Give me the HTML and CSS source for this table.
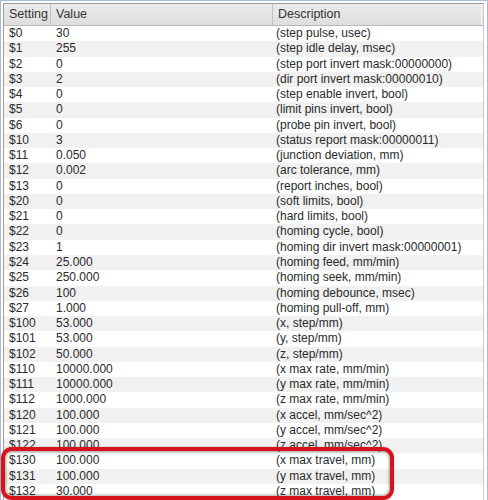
FILE: index.html
```html
<!DOCTYPE html>
<html>
<head>
<meta charset="utf-8">
<link rel="stylesheet" href="styles.css">
</head>
<body>
<div class="frame">
  <div class="grid">
    <div class="row head"><div class="c c1">Setting</div><div class="c c2">Value</div><div class="c c3">Description</div></div>
    <div class="row"><div class="c c1">$0</div><div class="c c2">30</div><div class="c c3">(step pulse, usec)</div></div>
    <div class="row"><div class="c c1">$1</div><div class="c c2">255</div><div class="c c3">(step idle delay, msec)</div></div>
    <div class="row"><div class="c c1">$2</div><div class="c c2">0</div><div class="c c3">(step port invert mask:00000000)</div></div>
    <div class="row"><div class="c c1">$3</div><div class="c c2">2</div><div class="c c3">(dir port invert mask:00000010)</div></div>
    <div class="row"><div class="c c1">$4</div><div class="c c2">0</div><div class="c c3">(step enable invert, bool)</div></div>
    <div class="row"><div class="c c1">$5</div><div class="c c2">0</div><div class="c c3">(limit pins invert, bool)</div></div>
    <div class="row"><div class="c c1">$6</div><div class="c c2">0</div><div class="c c3">(probe pin invert, bool)</div></div>
    <div class="row"><div class="c c1">$10</div><div class="c c2">3</div><div class="c c3">(status report mask:00000011)</div></div>
    <div class="row"><div class="c c1">$11</div><div class="c c2">0.050</div><div class="c c3">(junction deviation, mm)</div></div>
    <div class="row"><div class="c c1">$12</div><div class="c c2">0.002</div><div class="c c3">(arc tolerance, mm)</div></div>
    <div class="row"><div class="c c1">$13</div><div class="c c2">0</div><div class="c c3">(report inches, bool)</div></div>
    <div class="row"><div class="c c1">$20</div><div class="c c2">0</div><div class="c c3">(soft limits, bool)</div></div>
    <div class="row"><div class="c c1">$21</div><div class="c c2">0</div><div class="c c3">(hard limits, bool)</div></div>
    <div class="row"><div class="c c1">$22</div><div class="c c2">0</div><div class="c c3">(homing cycle, bool)</div></div>
    <div class="row"><div class="c c1">$23</div><div class="c c2">1</div><div class="c c3">(homing dir invert mask:00000001)</div></div>
    <div class="row"><div class="c c1">$24</div><div class="c c2">25.000</div><div class="c c3">(homing feed, mm/min)</div></div>
    <div class="row"><div class="c c1">$25</div><div class="c c2">250.000</div><div class="c c3">(homing seek, mm/min)</div></div>
    <div class="row"><div class="c c1">$26</div><div class="c c2">100</div><div class="c c3">(homing debounce, msec)</div></div>
    <div class="row"><div class="c c1">$27</div><div class="c c2">1.000</div><div class="c c3">(homing pull-off, mm)</div></div>
    <div class="row"><div class="c c1">$100</div><div class="c c2">53.000</div><div class="c c3">(x, step/mm)</div></div>
    <div class="row"><div class="c c1">$101</div><div class="c c2">53.000</div><div class="c c3">(y, step/mm)</div></div>
    <div class="row"><div class="c c1">$102</div><div class="c c2">50.000</div><div class="c c3">(z, step/mm)</div></div>
    <div class="row"><div class="c c1">$110</div><div class="c c2">10000.000</div><div class="c c3">(x max rate, mm/min)</div></div>
    <div class="row"><div class="c c1">$111</div><div class="c c2">10000.000</div><div class="c c3">(y max rate, mm/min)</div></div>
    <div class="row"><div class="c c1">$112</div><div class="c c2">1000.000</div><div class="c c3">(z max rate, mm/min)</div></div>
    <div class="row"><div class="c c1">$120</div><div class="c c2">100.000</div><div class="c c3">(x accel, mm/sec^2)</div></div>
    <div class="row"><div class="c c1">$121</div><div class="c c2">100.000</div><div class="c c3">(y accel, mm/sec^2)</div></div>
    <div class="row"><div class="c c1">$122</div><div class="c c2">100.000</div><div class="c c3">(z accel, mm/sec^2)</div></div>
    <div class="row"><div class="c c1">$130</div><div class="c c2">100.000</div><div class="c c3">(x max travel, mm)</div></div>
    <div class="row"><div class="c c1">$131</div><div class="c c2">100.000</div><div class="c c3">(y max travel, mm)</div></div>
    <div class="row"><div class="c c1">$132</div><div class="c c2">30.000</div><div class="c c3">(z max travel, mm)</div></div>
  </div>
  <div class="highlight"></div>
</div>
</body>
</html>
```
FILE: styles.css
```css
html, body {
  margin: 0;
  padding: 0;
  background: #ffffff;
  overflow: hidden;
}
body {
  width: 488px;
  height: 500px;
  font-family: "Liberation Sans", Arial, sans-serif;
  font-size: 12px;
  color: #2a2a2a;
}
.frame {
  position: relative;
  box-sizing: border-box;
  width: 488px;
  height: 500px;
  border: 1px solid #a8bdd3;
  border-bottom: none;
  padding: 2px 3px 0 2px;
  background: #ffffff;
}
.grid {
  border-left: 1px solid #9a9a9a;
  border-top: 1px solid #9a9a9a;
  border-right: 1px solid #c9c9c9;
  height: 100%;
  box-sizing: border-box;
}
.row {
  display: grid;
  grid-template-columns: 47px 222px 1fr;
  height: 15.27px;
  line-height: 15.27px;
  background: #ffffff;
}
.row:nth-child(odd) {
  background: #f1f1f1;
}
.row.head {
  height: 21px;
  line-height: 20px;
  background: linear-gradient(#ececec, #dddddd);
  border-bottom: 1px solid #b9b9b9;
  font-size: 12.5px;
  color: #333;
}
.c {
  padding-left: 5px;
  white-space: nowrap;
  overflow: hidden;
}
.c3 {
  padding-left: 3px;
}
.head .c {
  border-right: 1px solid #c2c2c2;
  padding-left: 5px;
}
.head .c3 {
  margin-right: 1px;
  border-right: 1px solid #f4f4f4;
}
.highlight {
  position: absolute;
  left: 0;
  top: 446px;
  width: 393px;
  height: 53px;
  box-sizing: border-box;
  border: 4px solid #d6121b;
  border-radius: 11px;
  box-shadow: inset 0 0 3px 1px rgba(0, 0, 0, 0.35), 0 0 2px rgba(0, 0, 0, 0.3);
}
```
